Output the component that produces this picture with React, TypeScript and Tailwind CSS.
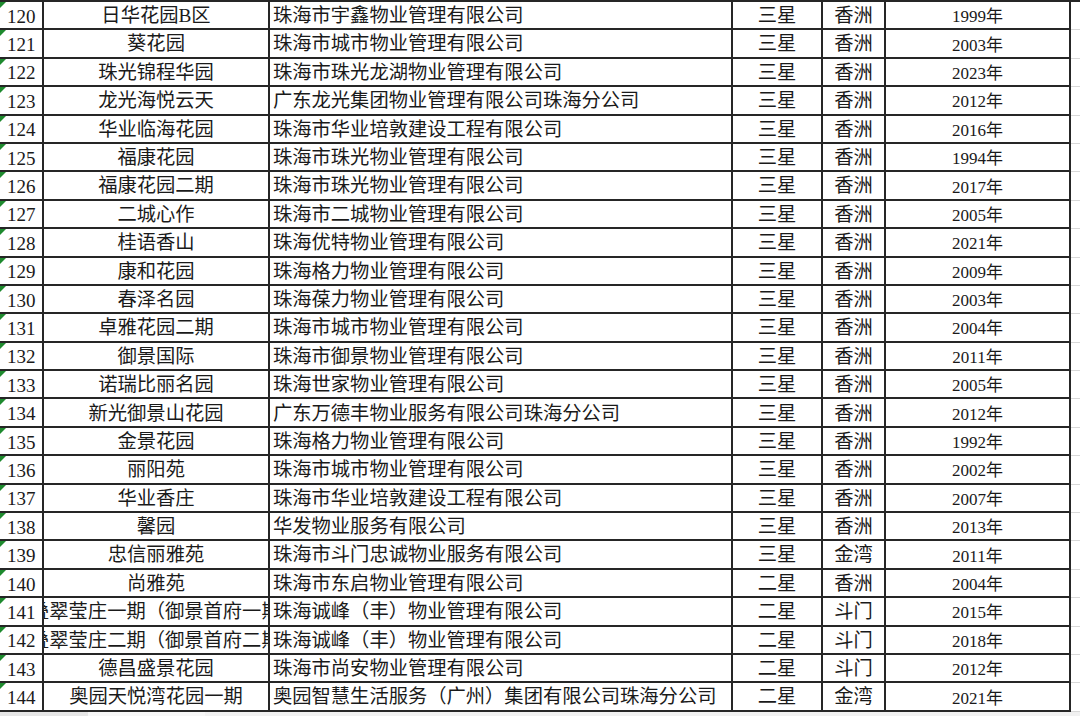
import React from 'react'

type Row = [number, string, string, string, string, string]

const rows: Row[] = [
  [120, '日华花园B区', '珠海市宇鑫物业管理有限公司', '三星', '香洲', '1999年'],
  [121, '葵花园', '珠海市城市物业管理有限公司', '三星', '香洲', '2003年'],
  [122, '珠光锦程华园', '珠海市珠光龙湖物业管理有限公司', '三星', '香洲', '2023年'],
  [123, '龙光海悦云天', '广东龙光集团物业管理有限公司珠海分公司', '三星', '香洲', '2012年'],
  [124, '华业临海花园', '珠海市华业培敦建设工程有限公司', '三星', '香洲', '2016年'],
  [125, '福康花园', '珠海市珠光物业管理有限公司', '三星', '香洲', '1994年'],
  [126, '福康花园二期', '珠海市珠光物业管理有限公司', '三星', '香洲', '2017年'],
  [127, '二城心作', '珠海市二城物业管理有限公司', '三星', '香洲', '2005年'],
  [128, '桂语香山', '珠海优特物业管理有限公司', '三星', '香洲', '2021年'],
  [129, '康和花园', '珠海格力物业管理有限公司', '三星', '香洲', '2009年'],
  [130, '春泽名园', '珠海葆力物业管理有限公司', '三星', '香洲', '2003年'],
  [131, '卓雅花园二期', '珠海市城市物业管理有限公司', '三星', '香洲', '2004年'],
  [132, '御景国际', '珠海市御景物业管理有限公司', '三星', '香洲', '2011年'],
  [133, '诺瑞比丽名园', '珠海世家物业管理有限公司', '三星', '香洲', '2005年'],
  [134, '新光御景山花园', '广东万德丰物业服务有限公司珠海分公司', '三星', '香洲', '2012年'],
  [135, '金景花园', '珠海格力物业管理有限公司', '三星', '香洲', '1992年'],
  [136, '丽阳苑', '珠海市城市物业管理有限公司', '三星', '香洲', '2002年'],
  [137, '华业香庄', '珠海市华业培敦建设工程有限公司', '三星', '香洲', '2007年'],
  [138, '馨园', '华发物业服务有限公司', '三星', '香洲', '2013年'],
  [139, '忠信丽雅苑', '珠海市斗门忠诚物业服务有限公司', '三星', '金湾', '2011年'],
  [140, '尚雅苑', '珠海市东启物业管理有限公司', '二星', '香洲', '2004年'],
  [141, '叠翠莹庄一期（御景首府一期）', '珠海诚峰（丰）物业管理有限公司', '二星', '斗门', '2015年'],
  [142, '叠翠莹庄二期（御景首府二期）', '珠海诚峰（丰）物业管理有限公司', '二星', '斗门', '2018年'],
  [143, '德昌盛景花园', '珠海市尚安物业管理有限公司', '二星', '斗门', '2012年'],
  [144, '奥园天悦湾花园一期', '奥园智慧生活服务（广州）集团有限公司珠海分公司', '二星', '金湾', '2021年'],
]

const cell = 'border-r-2 border-b-2 border-[#262626] overflow-hidden whitespace-nowrap'

export default function App() {
  return (
    <div
      className="w-[1080px] h-[716px] bg-white overflow-hidden flex flex-col text-[#1a1a1a]"
      style={{ fontFamily: '"Liberation Serif", "Noto Sans CJK SC", serif' }}
    >
      <div className="flex flex-col border-t-2 border-[#262626]">
        {rows.map(([no, name, company, level, area, year]) => (
          <div key={no} className="flex h-[28.4px] text-[19.3px] leading-none">
            <div className={`${cell} relative w-[44px] flex items-center pl-[7px] pt-[2px] text-[19px]`}>
              <span className="absolute left-0 top-0 w-0 h-0 border-t-[6px] border-r-[6px] border-t-[#1e8a2e] border-r-transparent" />
              {no}
            </div>
            <div
              className={`${cell} w-[226px] flex items-center justify-center pt-[1px] ${
                name.length > 12 ? 'pl-[18px]' : ''
              }`}
            >
              {name}
            </div>
            <div className={`${cell} w-[463px] flex items-center pl-[3px] pt-[1px]`}>{company}</div>
            <div className={`${cell} w-[90px] flex items-center justify-center pt-[1px]`}>{level}</div>
            <div className={`${cell} w-[63px] flex items-center justify-center pt-[1px]`}>{area}</div>
            <div className={`${cell} w-[185px] flex items-center justify-center text-[17px] pt-[3px]`}>{year}</div>
            <div className="flex-1 border-b border-[#d8d8d8]" />
          </div>
        ))}
      </div>
      <div className="flex-1 flex bg-[#f1f1f1]">
        <div className="w-[88px] bg-[#e6e6e6]" />
        <div className="w-[117px] bg-[#f7f7f7]" />
        <div className="flex-1" />
      </div>
    </div>
  )
}
